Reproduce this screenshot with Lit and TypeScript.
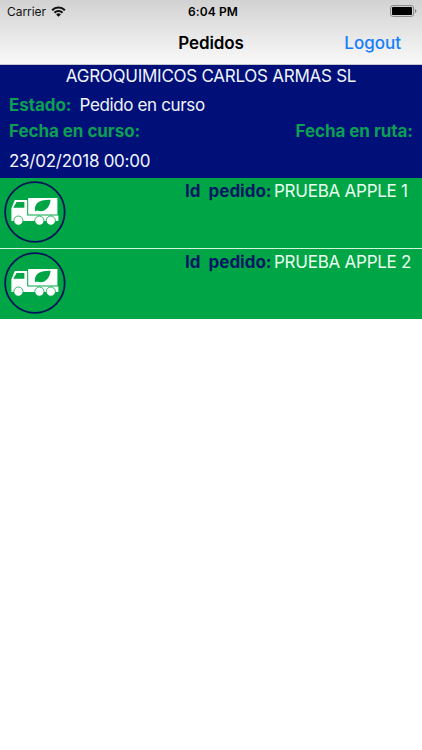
import { LitElement, html, css, svg } from "lit";
import { customElement, property } from "lit/decorators.js";

@customElement("status-bar")
class StatusBar extends LitElement {
  static styles = css`
    :host { display: grid; grid-template-columns: 1fr auto 1fr; align-items: center; height: 22px; padding: 0 5px 0 7px; font-size: 12px; color: #111; }
    .left { display: flex; align-items: center; gap: 5px; letter-spacing: -0.05px; }
    .time { font-weight: 600; font-size: 12px; letter-spacing: 0.1px; padding-left: 2px; color: #000; }
    .right { display: flex; justify-content: flex-end; }
    svg { display: block; }
  `;
  render() {
    return html`
      <div class="left"><span>Carrier</span>
        <svg width="15" height="11" viewBox="0 0 15 11" fill="none" stroke="#111" stroke-width="2.1">
          <path d="M1.1 4.2a9 9 0 0 1 12.8 0M3.5 6.7a5.6 5.6 0 0 1 8 0" />
          <path d="M7.5 10.8 5.1 8.4a3.4 3.4 0 0 1 4.8 0z" fill="#111" stroke="none" />
        </svg>
      </div>
      <div class="time">6:04 PM</div>
      <div class="right">
        <svg width="27" height="12" viewBox="0 0 27 12">
          <rect x=".6" y=".6" width="23" height="10.8" rx="2.3" fill="none" stroke="#858585" />
          <rect x="2" y="2" width="20" height="8" rx=".8" fill="#000" />
          <path d="M25 4v4q1.4-.5 1.4-2T25 4z" fill="#858585" />
        </svg>
      </div>`;
  }
}

@customElement("order-row")
class OrderRow extends LitElement {
  @property() name = "";
  static styles = css`
    :host { display: flex; justify-content: space-between; height: 70px; background: #00a645; padding: 0 0 0 4px; box-sizing: border-box; }
    .truck { display: block; margin-top: 3px; }
    .info { display: flex; width: 237px; height: 26px; line-height: 26px; font-size: 17px; white-space: pre; }
    .label { width: 89px; font-weight: 700; color: #001864; }
    .name { color: #eafff0; letter-spacing: -0.25px; }
  `;
  render() {
    const wheels = [14.4, 35.4, 46.8];
    return html`
      <svg class="truck" width="62" height="62" viewBox="0 0 62 62">
        <circle cx="30.9" cy="31" r="29.8" fill="none" stroke="#001458" stroke-width="1.8" />
        <path d="M7.4 40V27.3L10.8 19H23.2V34.4H54.4V40z" fill="#fff" />
        <path d="M24.2 17H53.4V33.5H24.2z" fill="#fff" />
        <path d="M9.2 26.8 12.6 20.9H20.4V26.8z" fill="#00a645" />
        <path d="M31 30.5C30.2 23 34 18.6 46.6 18.8 45.6 28.4 38.8 32 33.2 29.4 31.8 29.6 31.4 30 31 30.5z" fill="#00a645" />
        ${wheels.map((x) => svg`<circle cx=${x} cy="39.6" r="4.6" fill="#fff" stroke="#00a645" stroke-width=".8" />`)}
      </svg>
      <div class="info"><span class="label">Id  pedido:</span><span class="name">${this.name}</span></div>`;
  }
}

@customElement("app-root")
class AppRoot extends LitElement {
  static styles = css`
    :host { display: block; height: 750px; overflow: hidden; background: #fff; font-family: Inter, "Liberation Sans", sans-serif; font-size: 17px; }
    .top { height: 65px; background: linear-gradient(#d2d2d2, #f9f9f9); border-bottom: 1px solid #c6c6ce; box-sizing: border-box; }
    .nav { display: grid; grid-template-columns: 1fr auto 1fr; align-items: center; height: 42px; padding: 0 21px; }
    .title { grid-column: 2; font-weight: 600; letter-spacing: -0.1px; color: #000; }
    .logout { justify-self: end; font-weight: 500; color: #147efb; }
    .summary { height: 113px; box-sizing: border-box; background: #001078; color: #f2f4ff; padding: 0 9px; letter-spacing: -0.26px; }
    .company { text-align: center; height: 24px; line-height: 23px; }
    .line { display: flex; height: 29px; line-height: 33px; gap: 8px; white-space: pre; }
    .state { letter-spacing: -0.36px; }
    .dates { display: flex; justify-content: space-between; height: 28px; line-height: 27px; }
    .key { font-weight: 700; letter-spacing: -0.05px; color: #0c9f54; }
    .date { line-height: 30px; }
    .orders { display: flex; flex-direction: column; gap: 1px; background: #d5f5df; }
  `;
  render() {
    return html`
      <div class="top">
        <status-bar></status-bar>
        <div class="nav"><span class="title">Pedidos</span><span class="logout">Logout</span></div>
      </div>
      <div class="summary">
        <div class="company">AGROQUIMICOS CARLOS ARMAS SL</div>
        <div class="line"><span class="key">Estado:</span><span class="state">Pedido en curso</span></div>
        <div class="dates"><span class="key">Fecha en curso:</span><span class="key">Fecha en ruta:</span></div>
        <div class="date">23/02/2018 00:00</div>
      </div>
      <div class="orders">
        ${["PRUEBA APPLE 1", "PRUEBA APPLE 2"].map((n) => html`<order-row .name=${n}></order-row>`)}
      </div>`;
  }
}
